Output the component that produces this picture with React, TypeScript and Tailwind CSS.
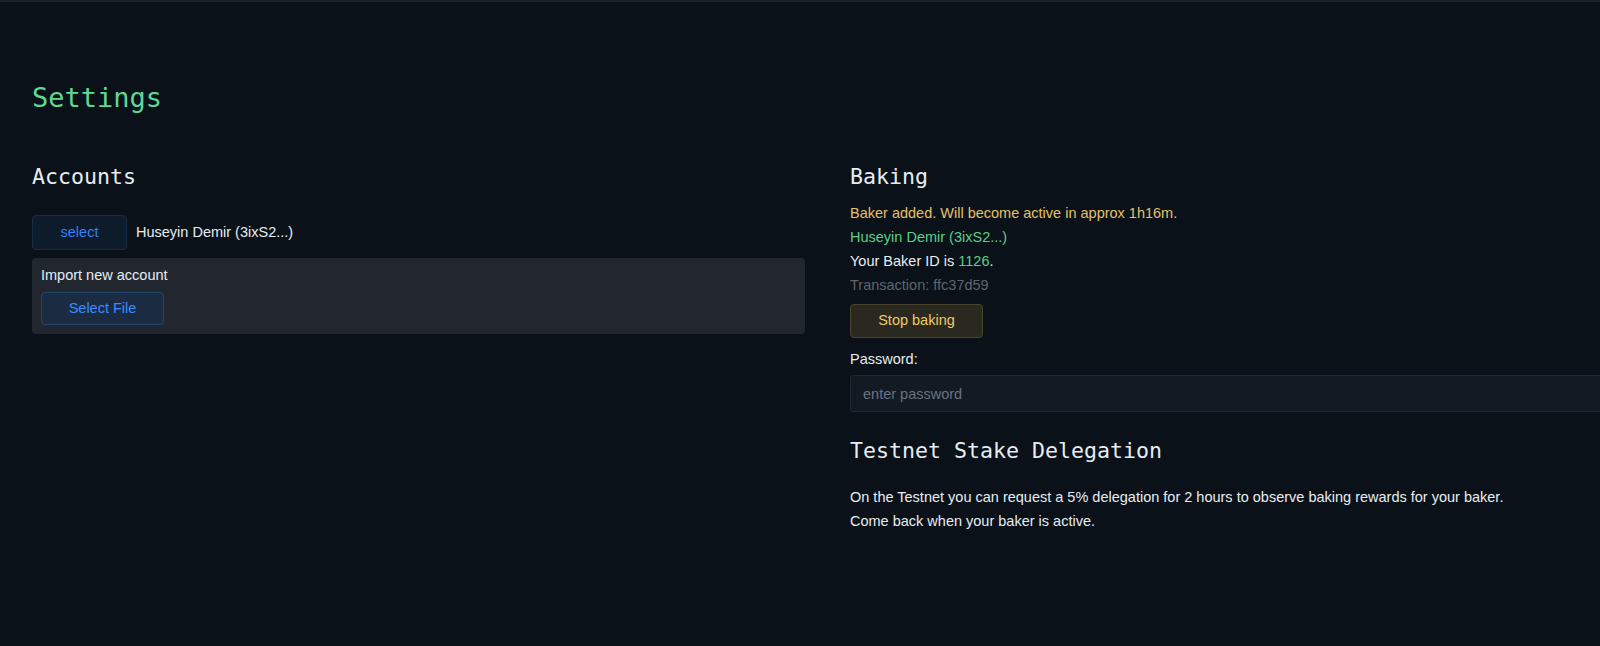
export default function App() {
  const mono = "font-['DejaVu_Sans_Mono',monospace]";
  return (
    <div className="min-h-[646px] w-[1600px] overflow-hidden bg-[#0b1118] font-['Liberation_Sans',Arial,sans-serif] text-[14.5px] text-[#e6edf3]">
      <div className="h-[2px] bg-[#1b222b]" />
      <div className="px-[32px] pt-[78px]">
        <h1 className={`${mono} text-[27px] leading-[36px] text-[#5fd896]`}>Settings</h1>

        <div className="mt-[46px] grid w-[1591px] grid-cols-[773px_773px] gap-[45px]">
          {/* Accounts */}
          <section>
            <h2 className={`${mono} text-[21.6px] leading-[30px] text-[#e6edf3]`}>Accounts</h2>
            <div className="mt-[23px] flex items-center gap-[9px]">
              <button className="h-[35px] w-[95px] rounded-[4px] border border-[#172c44] bg-[#0e1b2b] text-[#2f81f7]">
                select
              </button>
              <span>Huseyin Demir (3ixS2...)</span>
            </div>
            <div className="mt-[8px] rounded-[4px] bg-[#22272f] px-[9px] pt-[7px] pb-[9px]">
              <div className="leading-[20px]">Import new account</div>
              <button className="mt-[7px] h-[33px] w-[123px] rounded-[4px] border border-[#24456c] bg-[#1b2c42] text-[#3d8bfd]">
                Select File
              </button>
            </div>
          </section>

          {/* Baking */}
          <section>
            <h2 className={`${mono} text-[21.6px] leading-[30px] text-[#e6edf3]`}>Baking</h2>
            <div className="mt-[9px] leading-[24px]">
              <div className="text-[#e3c06b]">Baker added. Will become active in approx 1h16m.</div>
              <div className="text-[#5ad08a]">Huseyin Demir (3ixS2...)</div>
              <div>
                Your Baker ID is <span className="text-[#5ad08a]">1126</span>.
              </div>
              <div className="text-[#5e656e]">Transaction: ffc37d59</div>
            </div>
            <button className="mt-[7px] h-[34px] w-[133px] rounded-[4px] border border-[#4a4530] bg-[#2a2920] text-[#efc964]">
              Stop baking
            </button>
            <div className="mt-[9px] leading-[24px]">Password:</div>
            <input
              type="password"
              placeholder="enter password"
              className="mt-[4px] h-[37px] w-full rounded-[3px] border border-[#22282f] bg-[#131a24] px-[12px] text-[#e6edf3] outline-none placeholder:text-[#6b7280]"
            />
            <h2 className={`${mono} mt-[24px] text-[21.6px] leading-[30px] text-[#e6edf3]`}>
              Testnet Stake Delegation
            </h2>
            <div className="mt-[19px] leading-[24px]">
              <div>On the Testnet you can request a 5% delegation for 2 hours to observe baking rewards for your baker.</div>
              <div>Come back when your baker is active.</div>
            </div>
          </section>
        </div>
      </div>
    </div>
  );
}
